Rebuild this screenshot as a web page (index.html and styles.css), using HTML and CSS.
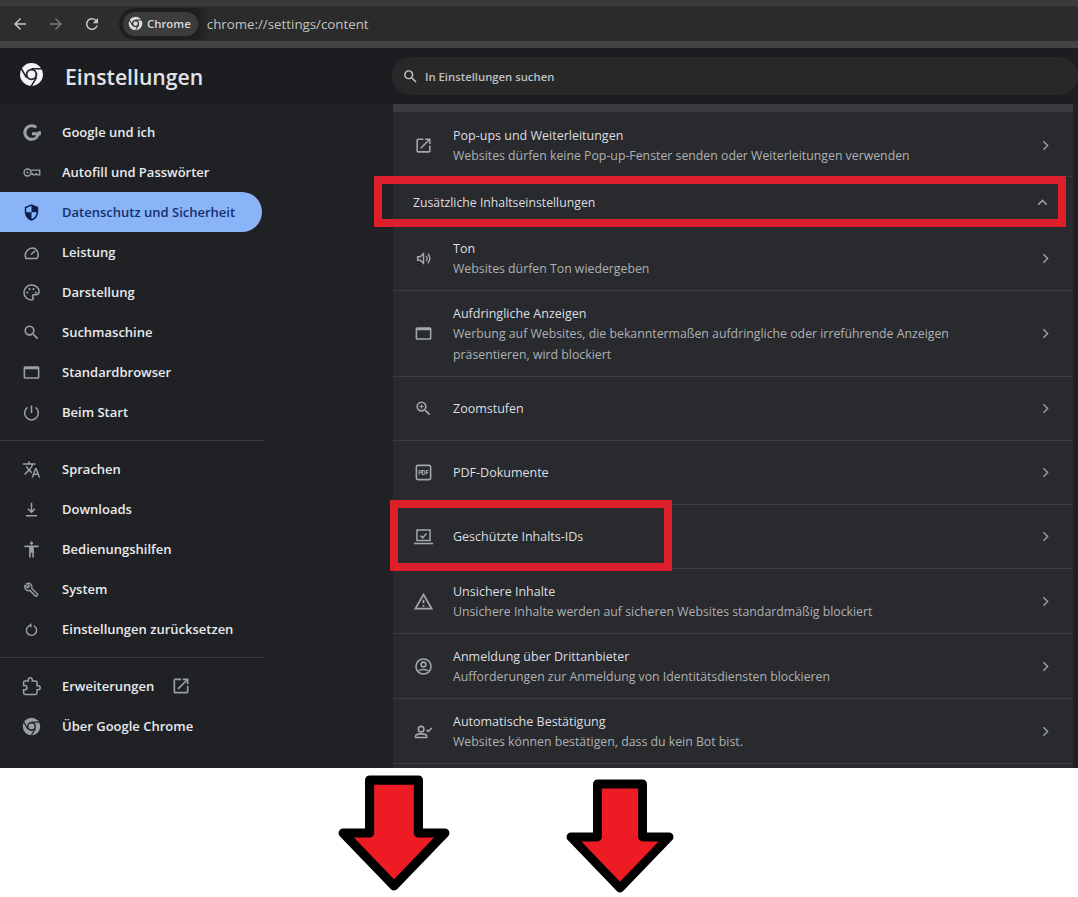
FILE: index.html
```html
<!DOCTYPE html>
<html lang="de">
<head>
<meta charset="utf-8">
<title>Einstellungen</title>
<link rel="stylesheet" href="styles.css">
</head>
<body>
<svg class="defs" aria-hidden="true">
  <symbol id="chrome" viewBox="0 0 24 24">
    <circle cx="12" cy="12" r="11" fill="currentColor"/>
    <circle cx="12" cy="12" r="5.6" fill="#202124"/>
    <circle cx="12" cy="12" r="3.8" fill="currentColor"/>
    <path d="M12 6.4H22.4M7.2 15L2 6M16.8 15L11.6 23.4" stroke="#202124" stroke-width="1.5" fill="none"/>
  </symbol>
  <symbol id="open" viewBox="0 0 24 24">
    <path fill="currentColor" d="M19 19H5V5h7V3H5a2 2 0 0 0-2 2v14a2 2 0 0 0 2 2h14c1.1 0 2-.9 2-2v-7h-2v7zM14 3v2h3.59l-9.83 9.83 1.41 1.41L19 6.41V10h2V3h-7z"/>
  </symbol>
  <symbol id="window" viewBox="0 0 24 24">
    <path fill="currentColor" d="M20 4H4c-1.1 0-2 .9-2 2v12c0 1.1.9 2 2 2h16c1.1 0 2-.9 2-2V6c0-1.1-.9-2-2-2zm0 14H4V8h16v10z"/>
  </symbol>
  <symbol id="chev" viewBox="0 0 24 24">
    <path d="M9 6l6 6-6 6" fill="none" stroke="currentColor" stroke-width="2"/>
  </symbol>
  <symbol id="search" viewBox="0 0 24 24">
    <path fill="currentColor" d="M15.5 14h-.79l-.28-.27A6.471 6.471 0 0 0 16 9.5 6.5 6.5 0 1 0 9.5 16c1.61 0 3.09-.59 4.23-1.57l.27.28v.79l5 4.99L20.49 19l-4.99-5zm-6 0C7.01 14 5 11.99 5 9.5S7.01 5 9.5 5 14 7.01 14 9.5 11.99 14 9.5 14z"/>
  </symbol>
</svg>

<div class="shot">
  <header class="toolbar">
    <div class="nav">
      <svg class="nav-icon" viewBox="0 0 24 24"><path fill="currentColor" d="M20 11H7.83l5.59-5.59L12 4l-8 8 8 8 1.41-1.41L7.83 13H20v-2z"/></svg>
      <svg class="nav-icon off" viewBox="0 0 24 24"><path fill="currentColor" d="M4 11h12.17l-5.59-5.59L12 4l8 8-8 8-1.41-1.41L16.17 13H4v-2z"/></svg>
      <svg class="nav-icon" viewBox="0 0 24 24"><path fill="currentColor" d="M17.65 6.35A7.958 7.958 0 0 0 12 4c-4.42 0-7.99 3.58-7.99 8s3.57 8 7.99 8c3.73 0 6.84-2.55 7.73-6h-2.08A5.99 5.99 0 0 1 12 18c-3.31 0-6-2.69-6-6s2.69-6 6-6c1.66 0 3.14.69 4.22 1.78L13 11h7V4l-2.35 2.35z"/></svg>
    </div>
    <div class="omnibox">
      <span class="chip"><svg class="chip-logo"><use href="#chrome"/></svg>Chrome</span>
      <span class="url">chrome://settings/content</span>
    </div>
  </header>

  <div class="titlebar">
    <div class="brand">
      <svg class="brand-logo"><use href="#chrome"/></svg>
      <span class="brand-name">Einstellungen</span>
    </div>
    <div class="searchbox">
      <svg class="search-icon"><use href="#search"/></svg>
      <span>In Einstellungen suchen</span>
    </div>
  </div>

  <div class="body">
    <nav class="sidebar">
      <a class="item">
        <svg class="ico" viewBox="0 0 24 24"><path fill="none" stroke="currentColor" stroke-width="3.8" d="M22 10.400v3.200H12.600M20.600 13c-.5 4.600-4 7.600-8.400 7.600a8.600 8.600 0 1 1 5.800-15"/></svg>
        Google und ich
      </a>
      <a class="item">
        <svg class="ico" viewBox="0 0 24 24"><circle cx="7" cy="12" r="4.4" fill="none" stroke="currentColor" stroke-width="1.8"/><circle cx="7" cy="12" r="1.4" fill="currentColor"/><path fill="none" stroke="currentColor" stroke-width="1.8" d="M11.4 9h11v6h-3.2l-1.4-1.4-1.4 1.4h-2l-1.4-1.4-1.2 1"/></svg>
        Autofill und Passwörter
      </a>
      <a class="item active">
        <svg class="ico" viewBox="0 0 24 24"><path fill="currentColor" d="M12 1.5L3.5 5v6.2c0 5.2 3.6 10 8.5 11.3 4.9-1.3 8.500-6.100 8.500-11.300V5z"/><path fill="#8ab4f8" d="M12 3.600v8.200H5.400V6.300zM12 11.800h6.600c-.5 3.900-3.100 7.300-6.600 8.500z"/></svg>
        Datenschutz und Sicherheit
      </a>
      <a class="item">
        <svg class="ico" viewBox="0 0 24 24"><path fill="none" stroke="currentColor" stroke-width="1.900" d="M5 19.500h14a9.300 9.300 0 0 0-2.500-12.500A9.300 9.300 0 0 0 5 19.500zM11.500 14.500l5-4.500"/></svg>
        Leistung
      </a>
      <a class="item">
        <svg class="ico" viewBox="0 0 24 24"><path fill="none" stroke="currentColor" stroke-width="1.900" d="M12 2.500a9.500 9.500 0 0 0 0 19c1.500 0 2.300-1 2.300-2.100 0-1.400-1.100-1.700-1.100-2.900 0-1 .8-1.700 1.900-1.700h2.300a4.100 4.100 0 0 0 4.100-4.100c0-4.500-4.200-8.200-9.500-8.200z"/><circle cx="6.700" cy="12" r="1.400" fill="currentColor"/><circle cx="9.500" cy="7.700" r="1.400" fill="currentColor"/><circle cx="14.500" cy="7.700" r="1.400" fill="currentColor"/><circle cx="17.400" cy="12" r="1.400" fill="currentColor"/></svg>
        Darstellung
      </a>
      <a class="item">
        <svg class="ico" viewBox="0 0 24 24"><use href="#search"/></svg>
        Suchmaschine
      </a>
      <a class="item">
        <svg class="ico"><use href="#window"/></svg>
        Standardbrowser
      </a>
      <a class="item">
        <svg class="ico" viewBox="0 0 24 24"><path fill="none" stroke="currentColor" stroke-width="1.900" d="M12 3v9.500M7 5.500a8.700 8.700 0 1 0 10 0"/></svg>
        Beim Start
      </a>
      <hr class="rule">
      <a class="item">
        <svg class="ico" viewBox="0 0 24 24"><path fill="currentColor" d="M12.870 15.070l-2.540-2.510.03-.03A17.520 17.520 0 0 0 14.070 6H17V4h-7V2H8v2H1v1.990h11.170C11.500 7.920 10.440 9.750 9 11.350 8.070 10.320 7.300 9.190 6.690 8h-2c.73 1.630 1.730 3.170 2.980 4.560l-5.090 5.020L4 19l5-5 3.110 3.110.76-2.040zM18.500 10h-2L12 22h2l1.120-3h4.750L21 22h2l-4.500-12zm-2.620 7l1.620-4.330L19.120 17h-3.240z"/></svg>
        Sprachen
      </a>
      <a class="item">
        <svg class="ico" viewBox="0 0 24 24"><path fill="none" stroke="currentColor" stroke-width="1.900" d="M12 3.500v12M7.500 11l4.500 4.500 4.500-4.500M5 20h14"/></svg>
        Downloads
      </a>
      <a class="item">
        <svg class="ico" viewBox="0 0 24 24"><path fill="currentColor" d="M12 2c1.100 0 2 .9 2 2s-.9 2-2 2-2-.9-2-2 .9-2 2-2zm9 7h-6v13h-2v-6h-2v6H9V9H3V7h18v2z"/></svg>
        Bedienungshilfen
      </a>
      <a class="item">
        <svg class="ico" viewBox="-3 -3 30 30"><path fill="none" stroke="currentColor" stroke-width="2.200" d="M21.500 19.300l-9.100-9.100c.8-2.100.4-4.500-1.300-6.200-1.800-1.800-4.500-2.100-6.600-1.100L8.500 6.900 6 9.400 2 5.500C1 7.600 1.400 10.300 3.200 12.100c1.700 1.700 4.100 2.100 6.200 1.300l9.100 9.100c.3.300.9.300 1.200 0l1.800-1.900c.4-.5.400-1 0-1.300z"/></svg>
        System
      </a>
      <a class="item">
        <svg class="ico" viewBox="-2 -2 28 28"><path fill="none" stroke="currentColor" stroke-width="2.100" d="M8.500 6.500a7.500 7.500 0 1 0 7 0"/><path fill="currentColor" d="M12 2.500v7l-4.500-3.500z"/></svg>
        Einstellungen zurücksetzen
      </a>
      <hr class="rule">
      <a class="item">
        <svg class="ico" viewBox="0 0 24 24"><path fill="none" stroke="currentColor" stroke-width="1.900" d="M20.500 11H19V7a2 2 0 0 0-2-2h-4V3.500a2.500 2.500 0 0 0-5 0V5H4a2 2 0 0 0-2 2v3.800h1.500c1.500 0 2.700 1.200 2.700 2.700S5 16.200 3.500 16.200H2V20a2 2 0 0 0 2 2h13a2 2 0 0 0 2-2v-4h1.500a2.500 2.500 0 0 0 0-5z"/></svg>
        Erweiterungen
        <svg class="ext"><use href="#open"/></svg>
      </a>
      <a class="item">
        <svg class="ico"><use href="#chrome"/></svg>
        Über Google Chrome
      </a>
    </nav>

    <main class="card">
      <div class="strip"></div>
      <section class="row first">
        <svg class="row-ico"><use href="#open"/></svg>
        <div class="text"><div class="title">Pop-ups und Weiterleitungen</div><div class="desc">Websites dürfen keine Pop-up-Fenster senden oder Weiterleitungen verwenden</div></div>
        <svg class="chev"><use href="#chev"/></svg>
      </section>
      <section class="row group">
        <div class="group-title">Zusätzliche Inhaltseinstellungen</div>
        <svg class="chev up"><use href="#chev"/></svg>
      </section>
      <section class="row">
        <svg class="row-ico" viewBox="-1 -1 26 26"><path fill="none" stroke="currentColor" stroke-width="2" d="M4 9.500v5h3.500L12 18.500v-13L7.500 9.500zM15.500 8.500a5 5 0 0 1 0 7M18 5.500a9.500 9.500 0 0 1 0 13"/></svg>
        <div class="text"><div class="title">Ton</div><div class="desc">Websites dürfen Ton wiedergeben</div></div>
        <svg class="chev"><use href="#chev"/></svg>
      </section>
      <section class="row tall">
        <svg class="row-ico"><use href="#window"/></svg>
        <div class="text"><div class="title">Aufdringliche Anzeigen</div><div class="desc">Werbung auf Websites, die bekanntermaßen aufdringliche oder irreführende Anzeigen präsentieren, wird blockiert</div></div>
        <svg class="chev"><use href="#chev"/></svg>
      </section>
      <section class="row short">
        <svg class="row-ico" viewBox="0 0 24 24"><use href="#search"/><path stroke="currentColor" stroke-width="1.500" d="M9.500 7v5M7 9.500h5"/></svg>
        <div class="text"><div class="title">Zoomstufen</div></div>
        <svg class="chev"><use href="#chev"/></svg>
      </section>
      <section class="row short">
        <svg class="row-ico" viewBox="0 0 24 24"><rect x="3" y="3" width="18" height="18" rx="2" fill="none" stroke="currentColor" stroke-width="2"/><path fill="none" stroke="currentColor" stroke-width="1.300" d="M6.500 14.500v-5h1.800a1.300 1.300 0 0 1 0 2.800H6.500M10.700 9.500v5h1a2 2 0 0 0 2-2v-1a2 2 0 0 0-2-2zM15.600 14.500v-5h2.800M15.600 12h2.200"/></svg>
        <div class="text"><div class="title">PDF-Dokumente</div></div>
        <svg class="chev"><use href="#chev"/></svg>
      </section>
      <section class="row short">
        <svg class="row-ico wide" viewBox="0 0 24 24"><path fill="none" stroke="currentColor" stroke-width="1.700" d="M4.500 4.500h15v12h-15zM8.500 11l2.500 2.500 4.500-5"/><path stroke="currentColor" stroke-width="1.800" d="M1 20h22"/></svg>
        <div class="text"><div class="title">Geschützte Inhalts-IDs</div></div>
        <svg class="chev"><use href="#chev"/></svg>
      </section>
      <section class="row">
        <svg class="row-ico wide" viewBox="0 0 24 24"><path fill="currentColor" d="M12 5.990L19.530 19H4.470L12 5.990M12 2L1 21h22L12 2zm1 14h-2v2h2v-2zm0-6h-2v4h2v-4z"/></svg>
        <div class="text"><div class="title">Unsichere Inhalte</div><div class="desc">Unsichere Inhalte werden auf sicheren Websites standardmäßig blockiert</div></div>
        <svg class="chev"><use href="#chev"/></svg>
      </section>
      <section class="row">
        <svg class="row-ico" viewBox="0 0 24 24"><circle cx="12" cy="12" r="9.500" fill="none" stroke="currentColor" stroke-width="2"/><circle cx="12" cy="9.500" r="3" fill="none" stroke="currentColor" stroke-width="2"/><path fill="none" stroke="currentColor" stroke-width="2" d="M6 17.500c2-2.300 10-2.300 12 0"/></svg>
        <div class="text"><div class="title">Anmeldung über Drittanbieter</div><div class="desc">Aufforderungen zur Anmeldung von Identitätsdiensten blockieren</div></div>
        <svg class="chev"><use href="#chev"/></svg>
      </section>
      <section class="row">
        <svg class="row-ico" viewBox="0 0 24 24"><circle cx="9" cy="9" r="3.500" fill="none" stroke="currentColor" stroke-width="2"/><path fill="none" stroke="currentColor" stroke-width="2" d="M2 19.500v-1.500c0-2 4-3 7-3s7 1 7 3v1.500zM16 10l2 2 4.500-4.500"/></svg>
        <div class="text"><div class="title">Automatische Bestätigung</div><div class="desc">Websites können bestätigen, dass du kein Bot bist.</div></div>
        <svg class="chev"><use href="#chev"/></svg>
      </section>
    </main>
  </div>

  <div class="mark mark-group"></div>
  <div class="mark mark-ids"></div>
</div>

<div class="arrows">
  <svg class="arrow first" viewBox="0 0 110 116"><path d="M31 6h48v52h26L55 110 5 58h26z" fill="#ed1c24" stroke="#000" stroke-width="9" stroke-linejoin="round"/></svg>
  <svg class="arrow second" viewBox="0 0 110 118"><path d="M32 6h46v54h27L55 112 5 60h27z" fill="#ed1c24" stroke="#000" stroke-width="9" stroke-linejoin="round"/></svg>
</div>
</body>
</html>
```

FILE: styles.css
```css
* { box-sizing: border-box; }

html, body {
  margin: 0;
  background: #fff;
}

body {
  width: 1078px;
  height: 897px;
  overflow: hidden;
  font-family: "Open Sans", "Noto Sans", sans-serif;
}

.defs { display: none; }

.shot {
  position: relative;
  height: 768px;
  background: #202124;
  overflow: hidden;
}

/* browser toolbar */
.toolbar {
  height: 48px;
  display: flex;
  align-items: center;
  gap: 16px;
  padding: 0 0 0 9px;
  background: #2d2d2d;
  border-top: 6px solid #3a3a3a;
  border-bottom: 7px solid #434343;
}

.nav {
  display: flex;
  gap: 14px;
  align-items: center;
}

.nav-icon {
  width: 22px;
  height: 22px;
  color: #c7c7c7;
  padding: 2px;
}

.nav-icon.off { color: #777; }

.omnibox {
  flex: 1;
  height: 32px;
  display: flex;
  align-items: center;
  gap: 9px;
  padding-left: 4px;
  background: linear-gradient(90deg, #1f1f1f 76px, #2b2b2b 92px);
  border-radius: 16px 0 0 16px;
}

.chip {
  height: 24px;
  display: flex;
  align-items: center;
  gap: 4px;
  padding: 0 7px 0 5px;
  background: #3c3c3c;
  border-radius: 12px;
  color: #d9d9d9;
  font-size: 11.400px;
  font-weight: 600;
}

.chip-logo {
  width: 15px;
  height: 15px;
  color: #d9d9d9;
}

.url {
  color: #c2c2c2;
  font-size: 13.300px;
}

/* settings header */
.titlebar {
  height: 56px;
  display: flex;
  align-items: center;
  background: #1c1d21;
}

.brand {
  width: 392px;
  display: flex;
  align-items: center;
  gap: 21px;
  padding-left: 19px;
}

.brand-logo {
  width: 25px;
  height: 25px;
  color: #f1f3f4;
  margin-top: -3px;
}

.brand-name {
  color: #e3e3e6;
  font-size: 21.200px;
  font-weight: 600;
}

.searchbox {
  flex: 1;
  height: 38px;
  display: flex;
  align-items: center;
  gap: 6px;
  padding-left: 10px;
  background: #282828;
  border-radius: 19px;
  color: #bdc1c6;
  font-size: 11.300px;
  font-weight: 600;
}

.search-icon {
  width: 17px;
  height: 17px;
  color: #c8c8c8;
}

/* layout below header */
.body {
  display: flex;
  height: 664px;
}

.sidebar {
  width: 393px;
  padding-top: 8px;
  flex: none;
}

.item {
  height: 40px;
  display: flex;
  align-items: center;
  gap: 21px;
  padding-left: 22px;
  width: 262px;
  color: #e8eaed;
  font-size: 13px;
  font-weight: 600;
  white-space: nowrap;
}

.item.active {
  background: #8ab4f8;
  color: #14306e;
  border-radius: 0 20px 20px 0;
}

.ico {
  width: 19px;
  height: 19px;
  flex: none;
  color: #9aa0a6;
}

.item.active .ico { color: #0b1f4f; }

.ext {
  width: 20px;
  height: 20px;
  margin-left: -4px;
  color: #9aa0a6;
}

.rule {
  width: 265px;
  height: 1px;
  margin: 8px 0;
  border: 0;
  background: #3a3b3e;
}

/* content card */
.card {
  width: 680px;
  background: #292a2d;
  display: flex;
  flex-direction: column;
}

.strip {
  height: 8px;
  background: #3b3c3f;
}

.row {
  height: 65px;
  flex: none;
  display: flex;
  align-items: center;
  padding: 0 21px;
  gap: 20px;
  border-bottom: 1px solid #3c3d40;
}

.row.first { padding-top: 2px; }
.row.tall { height: 86px; }
.row.short { height: 64px; }
.row.group {
  height: 49px;
  padding: 2px 24px 0 20px;
  border-bottom: 0;
}

.row-ico {
  width: 19px;
  height: 19px;
  flex: none;
  color: #a3a6aa;
}

.row-ico.wide {
  width: 21px;
  height: 21px;
  margin: 0 -1px;
}

.text {
  flex: 1;
  padding-top: 2px;
}

.short .text { padding-top: 0; }

.title {
  color: #dcdee1;
  font-size: 12.500px;
  line-height: 20px;
}

.desc {
  color: #aeb1b5;
  font-size: 12.300px;
  line-height: 20.500px;
}

.group-title {
  flex: 1;
  color: #dcdee1;
  font-size: 12.250px;
}

.chev {
  width: 17px;
  height: 17px;
  flex: none;
  color: #9aa0a6;
  margin-right: -2px;
}

.chev.up { transform: rotate(-90deg); }

/* annotation frames drawn over the screenshot */
.mark {
  position: absolute;
  border: 8px solid #dc1f2b;
}

.mark-group {
  left: 374px;
  top: 176px;
  width: 692px;
  height: 51px;
}

.mark-ids {
  left: 390px;
  top: 500px;
  width: 282px;
  height: 71px;
}

/* arrows below the screenshot */
.arrows {
  height: 129px;
  display: flex;
  align-items: flex-start;
  padding: 6px 0 0 338px;
  gap: 116px;
}

.arrow {
  width: 112px;
  height: 118px;
  flex: none;
}

.arrow.second {
  margin-top: 3px;
  width: 108px;
}
```
